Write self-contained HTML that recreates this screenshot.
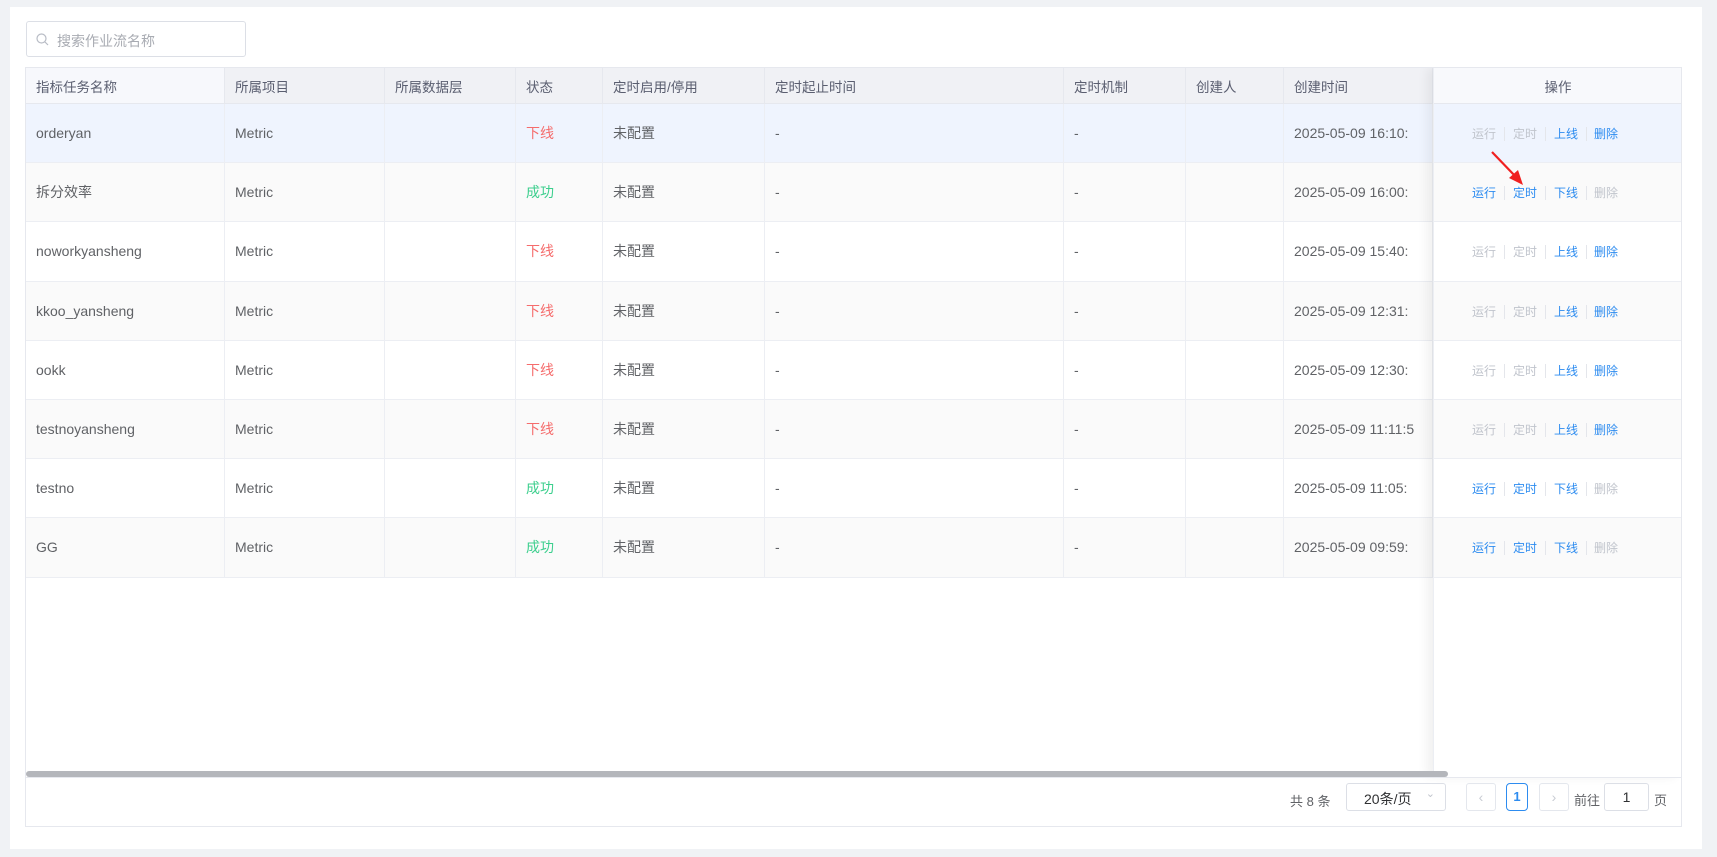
<!DOCTYPE html>
<html><head><meta charset="utf-8"><style>
*{box-sizing:border-box;margin:0;padding:0}
body{width:1717px;height:857px;background:#f0f2f5;font-family:"Liberation Sans","Noto Sans CJK SC",sans-serif;position:relative;overflow:hidden;color:#606266}
.panel{position:absolute;left:10px;top:7px;width:1692px;height:842px;background:#fff}
.search{position:absolute;left:26px;top:21px;width:220px;height:36px;border:1px solid #dcdfe6;border-radius:3px;font-size:14px;color:#a8abb2;padding:9px 0 0 30px}
.search svg{position:absolute;left:9px;top:11px}
.tbl{position:absolute;left:25px;top:67px;width:1657px;height:760px;border:1px solid #e6e8ee;overflow:hidden}
.c{position:absolute;font-size:14px;white-space:nowrap;overflow:hidden;padding-left:10px;display:flex;align-items:center}
.h{font-size:13.5px;color:#5a5e70;background:#f0f1f5;height:36px;top:0}
.fix{position:absolute;left:1407px;top:0;width:248px;height:709px;background:#fff;box-shadow:-6px 0 10px rgba(0,0,0,0.06);border-left:1px solid #eceef3}
.op{position:absolute;font-size:12px}
.b{color:#2d8cf0}.d{color:#c0c4cc}
.sep{position:absolute;width:1px;height:14px;background:#e4e6eb}
</style></head><body>
<div class="panel"></div>
<div class="search"><svg width="13" height="13" viewBox="0 0 13 13"><circle cx="5.5" cy="5.5" r="4.5" fill="none" stroke="#b8bcc5" stroke-width="1.2"/><line x1="9" y1="9" x2="12" y2="12" stroke="#b8bcc5" stroke-width="1.2"/></svg>搜索作业流名称</div>
<div class="tbl" id="t"></div>
<svg style="position:absolute;left:0;top:0" width="1717" height="857">
<line x1="1492" y1="152" x2="1516" y2="177" stroke="#f02020" stroke-width="2.2"/>
<polygon points="1523,185 1509,178 1518,170" fill="#f02020"/>
</svg>
<script>
const t=document.getElementById('t');
const cols=[0,199,359,490,577,739,1038,1160,1258,1407];
const heads=['指标任务名称','所属项目','所属数据层','状态','定时启用/停用','定时起止时间','定时机制','创建人','创建时间'];
const rows=[['orderyan','下线','16:10:',0],['拆分效率','成功','16:00:',1],['noworkyansheng','下线','15:40:',0],['kkoo_yansheng','下线','12:31:',0],['ookk','下线','12:30:',0],['testnoyansheng','下线','11:11:5',0],['testno','成功','11:05:',1],['GG','成功','09:59:',1]];
let h='';
for(let i=0;i<9;i++){h+=`<div class="c h" style="left:${cols[i]}px;width:${(i==8?1407:cols[i+1])-cols[i]}px;${i==0?'background:#f7f8fc;':''}border-right:1px solid #e6e8ee;border-bottom:1px solid #e6e8ee">${heads[i]}</div>`}
rows.forEach((r,k)=>{const top=36+k*59.2;const bg=k==0?'#eff4fe':(k%2?'#fafafa':'#fff');
const vals=[r[0],'Metric','',r[1],'未配置','-','-','','2025-05-09 '+r[2]];
for(let i=0;i<9;i++){const col=i==3?(r[1]=='下线'?'color:#f56c6c;':'color:#3dcf8e;'):'';
h+=`<div class="c" style="left:${cols[i]}px;top:${top}px;height:59.2px;width:${(i==8?1407:cols[i+1])-cols[i]}px;background:${bg};border-right:1px solid #eceef3;border-bottom:1px solid #eceef3;${col}">${vals[i]}</div>`}});
h+=`<div class="fix"><div class="c h" style="left:0;width:248px;background:#f8f9fc;justify-content:center;padding:0;border-bottom:1px solid #e6e8ee">操作</div>`;
rows.forEach((r,k)=>{const top=36+k*59.2;const bg=k==0?'#eff4fe':(k%2?'#fafafa':'#fff');const on=r[3];
h+=`<div style="position:absolute;left:0;top:${top}px;width:248px;height:59.2px;background:${bg};border-bottom:1px solid #eceef3">
<span class="op ${on?'b':'d'}" style="left:38px;top:21px">运行</span><div class="sep" style="left:70px;top:23px"></div>
<span class="op ${on?'b':'d'}" style="left:79px;top:21px">定时</span><div class="sep" style="left:111px;top:23px"></div>
<span class="op b" style="left:120px;top:21px">${on?'下线':'上线'}</span><div class="sep" style="left:152px;top:23px"></div>
<span class="op ${on?'d':'b'}" style="left:160px;top:21px">删除</span></div>`});
h+=`</div>`;
h+=`<div style="position:absolute;left:0;top:703px;width:1422px;height:6px;background:#b4b6bb;border-radius:3px"></div>`;
h+=`<div style="position:absolute;left:0;top:709px;width:1655px;border-top:1px solid #e6e8ee"></div>`;
h+=`<div style="position:absolute;left:1264px;top:723px;font-size:13px;color:#606266">共 8 条</div>
<div style="position:absolute;left:1320px;top:715px;width:100px;height:28px;border:1px solid #dcdfe6;border-radius:3px;font-size:14px;color:#303133;padding:5px 0 0 17px">20条/页<span style="position:absolute;right:10px;top:3px;color:#c0c4cc;font-size:11px">&#8964;</span></div>
<div style="position:absolute;left:1440px;top:715px;width:30px;height:28px;border:1px solid #e4e7ed;border-radius:3px;color:#c8ccd3;text-align:center;font-size:14px;line-height:26px">&#8249;</div>
<div style="position:absolute;left:1480px;top:715px;width:22px;height:28px;border:1px solid #2d8cf0;border-radius:4px;color:#2d8cf0;text-align:center;font-size:13px;font-weight:bold;line-height:26px">1</div>
<div style="position:absolute;left:1513px;top:715px;width:30px;height:28px;border:1px solid #e4e7ed;border-radius:3px;color:#c8ccd3;text-align:center;font-size:14px;line-height:26px">&#8250;</div>
<div style="position:absolute;left:1548px;top:722px;font-size:13px">前往</div>
<div style="position:absolute;left:1578px;top:715px;width:45px;height:28px;border:1px solid #dcdfe6;border-radius:3px;color:#303133;text-align:center;font-size:14px;line-height:26px">1</div>
<div style="position:absolute;left:1628px;top:722px;font-size:13px">页</div>`;
t.innerHTML=h;
</script>
</body></html>
